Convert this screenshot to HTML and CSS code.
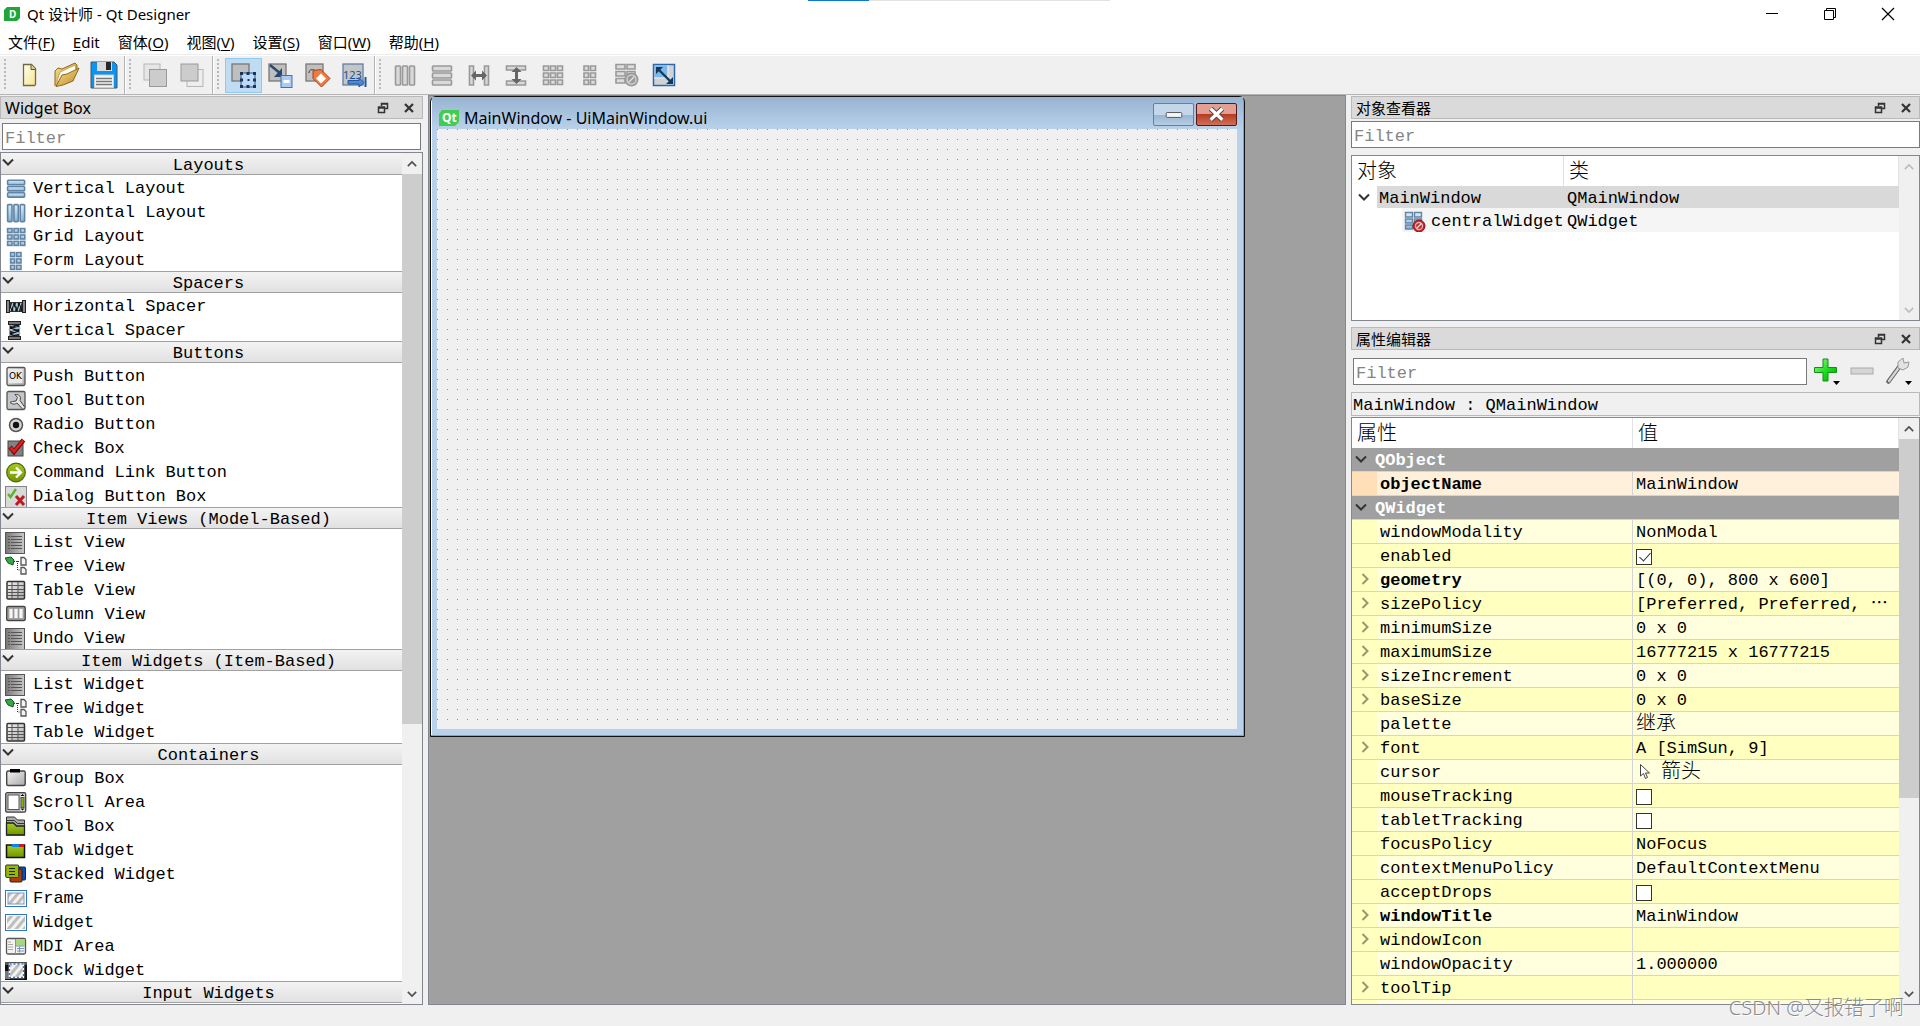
FILE: index.html
```html
<!DOCTYPE html>
<html lang="zh-CN">
<head>
<meta charset="utf-8">
<title>Qt 设计师 - Qt Designer</title>
<link rel="stylesheet" href="styles.css">
</head>
<body>
<svg class="defs" aria-hidden="true">
  <defs>
    <linearGradient id="blue" x1="0" y1="0" x2="0" y2="1"><stop offset="0" stop-color="#d9effb"/><stop offset="1" stop-color="#7fb4dc"/></linearGradient>
    <linearGradient id="grey" x1="0" y1="0" x2="1" y2="1"><stop offset="0" stop-color="#f4f4f4"/><stop offset="1" stop-color="#a9a9a9"/></linearGradient>
    <linearGradient id="dark" x1="0" y1="0" x2="1" y2="0"><stop offset="0" stop-color="#777"/><stop offset="1" stop-color="#c9c9c9"/></linearGradient>
    <linearGradient id="green" x1="0" y1="0" x2="0" y2="1"><stop offset="0" stop-color="#a8cc20"/><stop offset="1" stop-color="#6f9400"/></linearGradient>
    <linearGradient id="gold" x1="0" y1="0" x2="1" y2="1"><stop offset="0" stop-color="#fbe58a"/><stop offset="1" stop-color="#b8862a"/></linearGradient>
    <linearGradient id="paper" x1="0" y1="0" x2="1" y2="1"><stop offset="0" stop-color="#fffef2"/><stop offset="1" stop-color="#f6e58c"/></linearGradient>
    <linearGradient id="plus" x1="0" y1="0" x2="1" y2="1"><stop offset="0" stop-color="#b6f5a0"/><stop offset=".5" stop-color="#1fe01f"/><stop offset="1" stop-color="#00a800"/></linearGradient>
    <pattern id="hatch" width="6" height="6" patternUnits="userSpaceOnUse" patternTransform="rotate(40)"><rect width="6" height="6" fill="#f3f3f3"/><rect width="3" height="6" fill="#bdbdbd"/></pattern>
  </defs>
  <symbol id="down" viewBox="0 0 12 12"><path d="M1 3.500l5 5 5-5" fill="none" stroke="currentColor" stroke-width="2"/></symbol>
  <symbol id="up" viewBox="0 0 12 12"><path d="M1 8.500l5-5 5 5" fill="none" stroke="currentColor" stroke-width="2"/></symbol>
  <symbol id="right" viewBox="0 0 12 12"><path d="M3.500 1l5 5-5 5" fill="none" stroke="currentColor" stroke-width="2"/></symbol>
  <symbol id="float" viewBox="0 0 12 12"><path d="M4.500 4V1.500h6v5H8M4 2h7" fill="none" stroke="#333" stroke-width="1.500"/><path d="M1.500 5h6v5.500h-6zM1 6h7" fill="none" stroke="#333" stroke-width="1.500"/></symbol>
  <symbol id="cross" viewBox="0 0 12 12"><path d="M2 2l8 8M10 2l-8 8" stroke="#333" stroke-width="2.200"/></symbol>

  <symbol id="vlayout" viewBox="0 0 22 22"><g fill="url(#blue)" stroke="#6484a4" stroke-width="1.600"><rect x="2.600" y="2.300" width="17" height="4.400" rx=".8"/><rect x="2.600" y="8.500" width="17" height="4.400" rx=".8"/><rect x="2.600" y="14.700" width="17" height="4.400" rx=".8"/></g></symbol>
  <symbol id="hlayout" viewBox="0 0 22 22"><g fill="url(#blue)" stroke="#6484a4" stroke-width="1.600"><rect x="2.600" y="2.600" width="4.400" height="17" rx=".8"/><rect x="8.900" y="2.600" width="4.400" height="17" rx=".8"/><rect x="15.200" y="2.600" width="4.400" height="17" rx=".8"/></g></symbol>
  <symbol id="grid" viewBox="0 0 22 22"><g fill="url(#blue)" stroke="#6484a4" stroke-width="1.600"><rect x="2.600" y="2.600" width="4.400" height="4"/><rect x="9" y="2.600" width="4.400" height="4"/><rect x="15.400" y="2.600" width="4.400" height="4"/><rect x="2.600" y="9" width="4.400" height="4"/><rect x="9" y="9" width="4.400" height="4"/><rect x="15.400" y="9" width="4.400" height="4"/><rect x="2.600" y="15.400" width="4.400" height="4"/><rect x="9" y="15.400" width="4.400" height="4"/><rect x="15.400" y="15.400" width="4.400" height="4"/></g></symbol>
  <symbol id="form" viewBox="0 0 22 22"><g fill="url(#blue)" stroke="#6484a4" stroke-width="1.600"><rect x="5.600" y="2.600" width="4" height="4"/><rect x="11.600" y="2.600" width="4.400" height="4"/><rect x="5.600" y="9" width="4" height="4"/><rect x="11.600" y="9" width="4.400" height="4"/><rect x="5.600" y="15.400" width="4" height="4"/><rect x="11.600" y="15.400" width="4.400" height="4"/></g></symbol>
  <symbol id="hspacer" viewBox="0 0 22 22"><rect x="3" y="6" width="16" height="10" fill="#2b3036"/><path d="M5 15l3-8 1 8 3-8 1 8 3-8" fill="none" stroke="#a9c8da" stroke-width="1.300"/><path d="M4 7l3 8 2-8 3 8 2-8 3 8" fill="none" stroke="#111"/><rect x="1.500" y="4.500" width="3" height="12" fill="#888" stroke="#222"/><rect x="17.500" y="4.500" width="3" height="12" fill="#888" stroke="#222"/></symbol>
  <symbol id="vspacer" viewBox="0 0 22 22"><rect x="4.500" y="4" width="10" height="14" fill="#25292d"/><path d="M5 5l9 3-9 2 9 3-9 2" fill="none" stroke="#9dc3da" stroke-width="1.300"/><path d="M14 5l-9 3 9 3-9 3 9 3" fill="none" stroke="#111"/><rect x="3.500" y="1.500" width="12" height="3" fill="#777" stroke="#222"/><rect x="3.500" y="16.500" width="12" height="3" fill="#777" stroke="#222"/></symbol>
  <symbol id="tool" viewBox="0 0 22 22"><rect x="2" y="1.500" width="18" height="18" rx="1.500" fill="#c3c6ca" stroke="#555" stroke-width="1.300"/><path d="M5 12.500c4 3 6 1 7 .5l6 6.500 2-2-5-7c1.500-4-1-6.500-5-6l2.500 3-1.500 3.500-3.500.5z" fill="#e4e4e4" stroke="#444"/></symbol>
  <symbol id="radio" viewBox="0 0 22 22"><circle cx="11" cy="11" r="6.500" fill="#d5d5d5" stroke="#555" stroke-width="1.500"/><circle cx="11" cy="11" r="3.200" fill="#111"/></symbol>
  <symbol id="check" viewBox="0 0 22 22"><rect x="3" y="3" width="15" height="15" fill="#828282" stroke="#444"/><path d="M5 9l4 5 9.500-12" fill="none" stroke="#7a0909" stroke-width="4.500"/><path d="M5.500 9.500l3.500 4 9-11" fill="none" stroke="#dc1f1f" stroke-width="2.700"/></symbol>
  <symbol id="link" viewBox="0 0 22 22"><circle cx="11" cy="10.500" r="9.300" fill="url(#green)" stroke="#4f6510" stroke-width="1.200"/><path d="M5 10.500h11M11 5.500l5 5-5 5" fill="none" stroke="#fff" stroke-width="2.300"/></symbol>
  <symbol id="dialog" viewBox="0 0 22 22"><rect x=".5" y=".5" width="21" height="21" fill="#d9d9d9" stroke="#858585"/><path d="M3 8l2.500 3L11 3" fill="none" stroke="#58b52b" stroke-width="2.300"/><path d="M11 10l8 9M19 10l-8 9" stroke="#b81e24" stroke-width="3"/></symbol>
  <symbol id="list" viewBox="0 0 22 22"><rect x=".5" y=".5" width="19" height="21" fill="url(#dark)" stroke="#555"/><path d="M3 4.500h2M3 7.500h2M3 10.500h2M3 13.500h2M3 16.500h2M6 4.500h11M6 7.500h11M6 10.500h11M6 13.500h11M6 16.500h11" stroke="#555"/></symbol>
  <symbol id="tree" viewBox="0 0 22 22"><path d="M0 2l6-1 3 3-1 5-5-2z" fill="#35a846" stroke="#14581f"/><path d="M9 5.500h6M12.500 5v9h3" fill="none" stroke="#333" stroke-dasharray="1 1"/><path d="M16 1.500h3l2 2V9h-5zM16 11.500h3l2 2V18h-5z" fill="#f4f4f4" stroke="#555" stroke-width="1.300"/></symbol>
  <symbol id="table" viewBox="0 0 22 22"><rect x="2" y="1.500" width="17.500" height="17.500" rx="1" fill="url(#grey)" stroke="#333" stroke-width="1.500"/><path d="M2 5.500h17M2 9.500h17M2 12.500h17M2 15.500h17M7 2v17M13 2v17" stroke="#555"/></symbol>
  <symbol id="column" viewBox="0 0 22 22"><rect x="1.700" y="2.500" width="18.500" height="14" rx="1.500" fill="#aaa" stroke="#444" stroke-width="1.400"/><path d="M4 4.500h4v10H4zM9 4.500h4v10H9zM14 4.500h4v10h-4z" fill="#f6f6f6" stroke="#888" stroke-width=".6"/></symbol>
  <symbol id="group" viewBox="0 0 22 22"><rect x="1.700" y="3" width="18.500" height="14.500" rx="1.500" fill="url(#grey)" stroke="#444" stroke-width="1.400"/><rect x="5" y="1" width="10" height="3.500" fill="#000"/></symbol>
  <symbol id="scroll" viewBox="0 0 22 22"><rect x=".7" y=".7" width="20" height="19.500" rx="1.500" fill="#bdbdbd" stroke="#444" stroke-width="1.300"/><rect x="3" y="3" width="11" height="14.500" fill="#fff" stroke="#555"/><rect x="15.500" y="2" width="4" height="17" fill="#eee"/><rect x="16" y="5.500" width="3" height="10" fill="#8fb400" stroke="#456"/><path d="M17.500 2l2 2h-4zM17.500 18.500l2-2h-4z" fill="#000"/></symbol>
  <symbol id="toolbox" viewBox="0 0 22 22"><path d="M1.500 1h8l3 3h7v15h-18z" fill="#aaa" stroke="#333"/><path d="M1.500 4.500h8l3 3h7" fill="none" stroke="#333"/><path d="M1.500 7h7l3 3h8v9h-18z" fill="url(#green)" stroke="#222" stroke-width="1.300"/></symbol>
  <symbol id="tab" viewBox="0 0 22 22"><path d="M1.500 5h18v12.500h-18z" fill="url(#green)" stroke="#111" stroke-width="1.500"/><path d="M7 4h7v3H7z" fill="#0c87e8"/><path d="M14 4h5v3h-5z" fill="#e01414"/></symbol>
  <symbol id="stack" viewBox="0 0 22 22"><rect x="10" y="3" width="10.500" height="13" rx="1" fill="#0b4dbd" stroke="#222"/><rect x="5" y="5" width="12" height="13" rx="1" fill="#b23c08" stroke="#222"/><rect x=".7" y="1" width="13" height="12.500" rx="1" fill="#93b900" stroke="#333"/><path d="M4 4.500h6M4 7.500h6M4 10.500h6" stroke="#222"/></symbol>
  <symbol id="frame" viewBox="0 0 22 22"><rect x=".5" y="2.500" width="21" height="16" fill="#fff" stroke="#3076c8"/><rect x="3" y="5" width="16" height="11" fill="url(#hatch)" stroke="#7f99bd"/></symbol>
  <symbol id="widget" viewBox="0 0 22 22"><rect x=".5" y="2.500" width="21" height="16" fill="#fff" stroke="#3076c8"/><rect x="2" y="4" width="18" height="13" fill="url(#hatch)"/></symbol>
  <symbol id="mdi" viewBox="0 0 22 22"><rect x="1.500" y="2.500" width="19" height="15.500" rx="1.500" fill="#f3f3f3" stroke="#555" stroke-width="1.300"/><rect x="11" y="3.200" width="9" height="6.500" fill="#a9d57e"/><path d="M3 6h3M3 8.500h5M3 11h5M3 13.500h5" stroke="#aaa"/><path d="M10.500 3v15M10.500 10h9M12 12.500h7M12 15h7M14.500 10.500v6" stroke="#7694c4"/></symbol>
  <symbol id="dock" viewBox="0 0 22 22"><rect y="2" width="22" height="18" fill="#111"/><path d="M0 2h22v3H0z" fill="#555"/><path d="M0 11h5v8H0z" fill="#777"/><rect x="4.500" y="4" width="14" height="13.500" fill="url(#hatch)" stroke="#fff" stroke-width="1.500"/><rect x="4.500" y="4" width="14" height="13.500" fill="none" stroke="#3a76c4" stroke-width="1.300" stroke-dasharray="2 2"/></symbol>

  <symbol id="new" viewBox="0 0 28 28"><path d="M7.500 3.500h8l4 4v16l-1 1h-11z" fill="url(#paper)" stroke="#75683c" stroke-width="1.300"/><path d="M15 3.500v5h5" fill="#d8cf9a" stroke="#5f5636"/></symbol>
  <symbol id="open" viewBox="0 0 28 28"><path d="M2 25V10l3-3 4 1L22 2l2 2v5" fill="url(#gold)" stroke="#94691a"/><path d="M4 20l3-9 15-7 1 5-14 13z" fill="#fffdf2" stroke="#b9a46b"/><path d="M3 25.500L9 14l5-1 12-6-6 13-10 4z" fill="url(#gold)" stroke="#8f661c"/></symbol>
  <symbol id="save" viewBox="0 0 28 28"><path d="M1 1h23l3 3v23H1z" fill="#0c94f2" stroke="#4a545e"/><rect x="7" y="1" width="15" height="9" fill="#d8dadc"/><rect x="16" y="1" width="5" height="8" fill="#26292c"/><rect x="4.500" y="14" width="19" height="12.500" fill="#f4f4f4" stroke="#ccc"/><path d="M6 17.500h16M6 20.500h16M6 23.500h16" stroke="#777" stroke-width="1.300"/></symbol>
  <symbol id="front" viewBox="0 0 28 28"><rect x="3" y="3" width="16" height="16" fill="#e6e6e6" stroke="#b5b5b5"/><rect x="8.500" y="8.500" width="17" height="17" fill="#ccc" stroke="#999"/></symbol>
  <symbol id="back" viewBox="0 0 28 28"><rect x="9" y="8.500" width="16" height="17" fill="#eee" stroke="#b5b5b5"/><rect x="3" y="3" width="17" height="17" fill="#ccc" stroke="#999"/></symbol>
  <symbol id="edit" viewBox="0 0 28 28"><rect x="3" y="3" width="17" height="17" fill="#bfbfbf" stroke="#777" stroke-width="1.300"/><rect x="12" y="12" width="14" height="14" fill="#bcd8fb" stroke="#31578c"/><path d="M11 11h3v3h-3zM17.500 11h3v3h-3zM24 11h3v3h-3zM11 17.500h3v3h-3zM24 17.500h3v3h-3zM11 24h3v3h-3zM17.500 24h3v3h-3zM24 24h3v3h-3zM18.500 18h2v2h-2z" fill="#1c3557"/></symbol>
  <symbol id="signal" viewBox="0 0 28 28"><rect x="3" y="3" width="17" height="17" fill="#bfbfbf" stroke="#777" stroke-width="1.300"/><path d="M4 4l11 9" stroke="#294a6d" stroke-width="2.500"/><path d="M16 7v9H8z" fill="#294a6d"/><rect x="15" y="14.500" width="11" height="12" fill="#a9cbf5" stroke="#4770a8"/><rect x="17.500" y="19" width="6" height="3" fill="#fff"/></symbol>
  <symbol id="buddy" viewBox="0 0 28 28"><rect x="3" y="3" width="17" height="17" fill="#bfbfbf" stroke="#777" stroke-width="1.300"/><path d="M6 12c0-4 4-4 7-2" fill="none" stroke="#333"/><path d="M10 9.500l8-1 9 9-8.500 8.500-8.500-8.500z" fill="#f37a3e" stroke="#9d451c"/><path d="M18 12.500l5 5-5 5-5-5z" fill="#fff"/></symbol>
  <symbol id="g-h" viewBox="0 0 28 28"><g fill="#d9d9d9" stroke="#999" stroke-width="1.600"><rect x="4.500" y="5" width="5" height="19" rx=".8"/><rect x="11.500" y="5" width="5" height="19" rx=".8"/><rect x="18.500" y="5" width="5" height="19" rx=".8"/></g></symbol>
  <symbol id="g-v" viewBox="0 0 28 28"><g fill="#d9d9d9" stroke="#999" stroke-width="1.600"><rect x="4.500" y="5" width="19" height="5" rx=".8"/><rect x="4.500" y="12" width="19" height="5" rx=".8"/><rect x="4.500" y="19" width="19" height="5" rx=".8"/></g></symbol>
  <symbol id="g-hs" viewBox="0 0 28 28"><g fill="#d9d9d9" stroke="#999" stroke-width="1.600"><path d="M4.500 5h4v19h-4zM19.500 5h4v19h-4z"/></g><path d="M6 14.500l5-5v3.500h6V9.500l5 5-5 5V16h-6v3.500z" fill="#666"/></symbol>
  <symbol id="g-vs" viewBox="0 0 28 28"><g fill="#d9d9d9" stroke="#999" stroke-width="1.600"><path d="M4.500 5h19v4h-19zM4.500 20h19v4h-19z"/></g><path d="M14.500 6l5 5H16v7h3.500l-5 5-5-5H13v-7H9.500z" fill="#666"/></symbol>
  <symbol id="g-grid" viewBox="0 0 28 28"><g fill="#ddd" stroke="#999" stroke-width="1.600"><path d="M4.500 5h5v4.500h-5zM11.500 5h5v4.500h-5zM18.500 5h5v4.500h-5zM4.500 12h5v4.500h-5zM11.500 12h5v4.500h-5zM18.500 12h5v4.500h-5zM4.500 19h5v4.500h-5zM11.500 19h5v4.500h-5zM18.500 19h5v4.500h-5z"/></g></symbol>
  <symbol id="g-form" viewBox="0 0 28 28"><g fill="#ddd" stroke="#999" stroke-width="1.600"><path d="M8 5h4.500v4.500H8zM14.500 5h5v4.500h-5zM8 12h4.500v4.500H8zM14.500 12h5v4.500h-5zM8 19h4.500v4.500H8zM14.500 19h5v4.500h-5z"/></g></symbol>
  <symbol id="g-break" viewBox="0 0 28 28"><g fill="#ddd" stroke="#999" stroke-width="1.600"><path d="M3 3.500h9V8H3zM14 3.500h8V8h-8zM3 10.500h9V15H3zM14 10.500h8V15h-8zM3 17.500h9V22H3z"/></g><circle cx="18.500" cy="18.500" r="7" fill="#999"/><circle cx="18.500" cy="18.500" r="4.500" fill="none" stroke="#ccc" stroke-width="1.500"/><path d="M15.500 21.500l6-6" stroke="#ddd" stroke-width="1.500"/></symbol>
  <symbol id="adjust" viewBox="0 0 28 28"><rect x="3.500" y="3.500" width="21" height="21" fill="#cfd3d8" stroke="#2c68ad" stroke-width="1.500"/><rect x="4.500" y="4.500" width="13" height="12" fill="#7db8ec"/><path d="M18 4v13H4" fill="none" stroke="#eee"/><path d="M8 8l13 13" stroke="#12395c" stroke-width="2.300"/><path d="M6 6h7l-7 7zM23 23h-7l7-7z" fill="#12395c"/></symbol>
  <symbol id="broken" viewBox="0 0 22 22"><g fill="url(#blue)" stroke="#6484a4" stroke-width="1.400"><path d="M1.500 1.500h7V6h-7zM10.500 1.500h7V6h-7zM1.500 8h7v4h-7zM10.500 8h7v4h-7zM1.500 14h7v4h-7z"/></g><circle cx="15" cy="15" r="6" fill="#be2929" stroke="#812"/><circle cx="15" cy="15" r="3.500" fill="none" stroke="#e8b0b0" stroke-width="1.300"/><path d="M12.500 17.500l5-5" stroke="#f5d5d5" stroke-width="1.500"/></symbol>
  <symbol id="add" viewBox="0 0 26 30"><path d="M9 2h5v8.500h8.500v5H14V24H9v-8.500H.5v-5H9z" fill="url(#plus)" stroke="#109018"/><path d="M19 24h7l-3.500 4z" fill="#000"/></symbol>
  <symbol id="remove" viewBox="0 0 26 30"><rect x="1" y="11" width="22" height="6" fill="#d5d5d5" stroke="#aaa"/></symbol>
  <symbol id="wrench" viewBox="0 0 26 30"><path d="M2.500 24.500l11-15" stroke="#666" stroke-width="4.500" stroke-linecap="round"/><path d="M3 24l11-15" stroke="#d8d8d8" stroke-width="2.200" stroke-linecap="round"/><path d="M12 11V5l5-4 1 5 5-1-1 5-5 3z" fill="#e2e2e2" stroke="#999"/><path d="M19 24h7l-3.500 4z" fill="#000"/></symbol>
  <symbol id="arrow" viewBox="0 0 12 18"><path d="M1.500 1.500v11.500l3-2.500 2 5 2-1-2-4.500h4z" fill="#fff" stroke="#444"/></symbol>
</svg>

<header class="titlebar">
  <svg class="app-logo" viewBox="0 0 16 16"><path d="M3 1h13v11l-3 3H0V4z" fill="#1fa53a"/><text x="5" y="12" class="logo-d">D</text></svg>
  <h1 class="app-title">Qt 设计师 - Qt Designer</h1>
  <div class="sys-buttons">
    <button aria-label="最小化"><svg viewBox="0 0 14 14"><path d="M1 6.500h12" stroke="#000"/></svg></button>
    <button aria-label="还原"><svg viewBox="0 0 14 14"><path d="M1.500 3.500h9v9h-9zM3.500 3.500v-2h9v9h-2" fill="none" stroke="#000"/></svg></button>
    <button aria-label="关闭"><svg viewBox="0 0 14 14"><path d="M1 1l12 12M13 1L1 13" stroke="#000" stroke-width="1.200"/></svg></button>
  </div>
  <div class="progress"></div>
</header>

<nav class="menubar">
  <button>文件(<u>F</u>)</button><button><u>E</u>dit</button><button>窗体(<u>O</u>)</button><button>视图(<u>V</u>)</button><button>设置(<u>S</u>)</button><button>窗口(<u>W</u>)</button><button>帮助(<u>H</u>)</button>
</nav>

<div class="toolbars">
  <div class="toolbar">
    <button aria-label="新建"><svg><use href="#new"/></svg></button><button aria-label="打开"><svg><use href="#open"/></svg></button><button aria-label="保存"><svg><use href="#save"/></svg></button>
  </div>
  <div class="toolbar">
    <button aria-label="放到前面"><svg><use href="#front"/></svg></button><button aria-label="放到后面"><svg><use href="#back"/></svg></button>
  </div>
  <div class="toolbar">
    <button class="active" aria-label="编辑控件"><svg><use href="#edit"/></svg></button><button aria-label="编辑信号/槽"><svg><use href="#signal"/></svg></button><button aria-label="编辑伙伴"><svg><use href="#buddy"/></svg></button><button aria-label="编辑 Tab 顺序"><svg viewBox="0 0 28 28"><rect x="3" y="3" width="20" height="21" fill="#c5c5c5" stroke="#5f7fa9" stroke-width="1.300"/><text x="3" y="18" class="digits">123</text><path d="M8 19.500h11v-3l5 5-5 4.500v-3H8z" fill="#4d8ad6" stroke="#24569a"/><path d="M25.500 16v10" stroke="#24569a" stroke-width="2"/></svg></button>
  </div>
  <div class="toolbar">
    <button aria-label="水平布局"><svg><use href="#g-h"/></svg></button><button aria-label="垂直布局"><svg><use href="#g-v"/></svg></button><button aria-label="水平分裂器布局"><svg><use href="#g-hs"/></svg></button><button aria-label="垂直分裂器布局"><svg><use href="#g-vs"/></svg></button><button aria-label="栅格布局"><svg><use href="#g-grid"/></svg></button><button aria-label="表单布局"><svg><use href="#g-form"/></svg></button><button aria-label="打破布局"><svg><use href="#g-break"/></svg></button><button aria-label="调整大小"><svg><use href="#adjust"/></svg></button>
  </div>
</div>

<main class="workspace">
  <aside class="dock widget-box">
    <div class="dock-title latin"><h2>Widget Box</h2><button aria-label="浮动"><svg><use href="#float"/></svg></button><button aria-label="关闭"><svg><use href="#cross"/></svg></button></div>
    <input class="filter" type="text" placeholder="Filter" aria-label="Filter widgets">
    <div class="view">
      <div class="view-body">
        <h3><svg><use href="#down"/></svg>Layouts</h3>
        <ul>
          <li><svg><use href="#vlayout"/></svg>Vertical Layout</li>
          <li><svg><use href="#hlayout"/></svg>Horizontal Layout</li>
          <li><svg><use href="#grid"/></svg>Grid Layout</li>
          <li><svg><use href="#form"/></svg>Form Layout</li>
        </ul>
        <h3><svg><use href="#down"/></svg>Spacers</h3>
        <ul>
          <li><svg><use href="#hspacer"/></svg>Horizontal Spacer</li>
          <li><svg><use href="#vspacer"/></svg>Vertical Spacer</li>
        </ul>
        <h3><svg><use href="#down"/></svg>Buttons</h3>
        <ul>
          <li><svg viewBox="0 0 22 22"><rect x="2" y="1.500" width="18" height="18" rx="1.500" fill="url(#grey)" stroke="#555" stroke-width="1.300"/><rect x="3.500" y="3" width="14" height="14" fill="#e9e9e9"/><text x="4" y="13" class="tiny">OK</text></svg>Push Button</li>
          <li><svg><use href="#tool"/></svg>Tool Button</li>
          <li><svg><use href="#radio"/></svg>Radio Button</li>
          <li><svg><use href="#check"/></svg>Check Box</li>
          <li><svg><use href="#link"/></svg>Command Link Button</li>
          <li><svg><use href="#dialog"/></svg>Dialog Button Box</li>
        </ul>
        <h3><svg><use href="#down"/></svg>Item Views (Model-Based)</h3>
        <ul>
          <li><svg><use href="#list"/></svg>List View</li>
          <li><svg><use href="#tree"/></svg>Tree View</li>
          <li><svg><use href="#table"/></svg>Table View</li>
          <li><svg><use href="#column"/></svg>Column View</li>
          <li><svg><use href="#list"/></svg>Undo View</li>
        </ul>
        <h3><svg><use href="#down"/></svg>Item Widgets (Item-Based)</h3>
        <ul>
          <li><svg><use href="#list"/></svg>List Widget</li>
          <li><svg><use href="#tree"/></svg>Tree Widget</li>
          <li><svg><use href="#table"/></svg>Table Widget</li>
        </ul>
        <h3><svg><use href="#down"/></svg>Containers</h3>
        <ul>
          <li><svg><use href="#group"/></svg>Group Box</li>
          <li><svg><use href="#scroll"/></svg>Scroll Area</li>
          <li><svg><use href="#toolbox"/></svg>Tool Box</li>
          <li><svg><use href="#tab"/></svg>Tab Widget</li>
          <li><svg><use href="#stack"/></svg>Stacked Widget</li>
          <li><svg><use href="#frame"/></svg>Frame</li>
          <li><svg><use href="#widget"/></svg>Widget</li>
          <li><svg><use href="#mdi"/></svg>MDI Area</li>
          <li><svg><use href="#dock"/></svg>Dock Widget</li>
        </ul>
        <h3><svg><use href="#down"/></svg>Input Widgets</h3>
      </div>
      <div class="scrollbar"><svg><use href="#up"/></svg><div class="track"><div class="thumb thumb-widgets"></div></div><svg><use href="#down"/></svg></div>
    </div>
  </aside>

  <section class="mdi-area">
    <article class="form-window">
      <div class="form-title">
        <svg class="qt-logo" viewBox="0 0 20 16"><path d="M3 0h17v12l-4 4H0V4z" fill="#41cd52"/><text x="3" y="12" class="logo-qt">Qt</text></svg>
        <h2>MainWindow - UiMainWindow.ui</h2>
        <button class="form-min" aria-label="最小化"><svg viewBox="0 0 40 20"><rect x="12.500" y="8.500" width="16" height="5" rx="1" fill="#f6f6f6" stroke="#555"/></svg></button>
        <button class="form-close" aria-label="关闭"><svg viewBox="0 0 40 20"><path d="M14 4.500l12 11.500M26 4.500L14 16" stroke="#544" stroke-width="5.500"/><path d="M14 4.500l12 11.500M26 4.500L14 16" stroke="#fff" stroke-width="3.500"/></svg></button>
      </div>
      <div class="form-canvas"></div>
    </article>
  </section>

  <aside class="right-docks">
    <section class="dock inspector">
      <div class="dock-title"><h2>对象查看器</h2><button aria-label="浮动"><svg><use href="#float"/></svg></button><button aria-label="关闭"><svg><use href="#cross"/></svg></button></div>
      <input class="filter" type="text" placeholder="Filter" aria-label="Filter objects">
      <div class="view">
        <table class="objects">
          <thead><tr><th class="col-object">对象</th><th>类</th></tr></thead>
          <tbody>
            <tr class="selected"><td><div class="node"><svg class="twisty"><use href="#down"/></svg><span class="node-name">MainWindow</span></div></td><td>QMainWindow</td></tr>
            <tr class="alt"><td><div class="node child"><span class="node-name"><svg class="node-icon"><use href="#broken"/></svg>centralWidget</span></div></td><td>QWidget</td></tr>
          </tbody>
        </table>
        <div class="scrollbar idle"><svg><use href="#up"/></svg><div class="track"></div><svg><use href="#down"/></svg></div>
      </div>
    </section>

    <section class="dock editor">
      <div class="dock-title"><h2>属性编辑器</h2><button aria-label="浮动"><svg><use href="#float"/></svg></button><button aria-label="关闭"><svg><use href="#cross"/></svg></button></div>
      <div class="editor-tools">
        <input class="filter" type="text" placeholder="Filter" aria-label="Filter properties">
        <button aria-label="添加动态属性"><svg><use href="#add"/></svg></button><button aria-label="删除动态属性"><svg><use href="#remove"/></svg></button><button aria-label="配置"><svg><use href="#wrench"/></svg></button>
      </div>
      <p class="object-label">MainWindow : QMainWindow</p>
      <div class="view">
        <div class="view-body">
          <table class="properties">
            <thead><tr><th class="col-prop">属性</th><th>值</th></tr></thead>
            <tbody>
              <tr class="group"><th colspan="2"><svg><use href="#down"/></svg>QObject</th></tr>
              <tr class="object"><td><div class="prop"><i></i><b>objectName</b></div></td><td>MainWindow</td></tr>
              <tr class="group"><th colspan="2"><svg><use href="#down"/></svg>QWidget</th></tr>
              <tr><td><div class="prop"><i></i>windowModality</div></td><td>NonModal</td></tr>
              <tr><td><div class="prop"><i></i><label for="enabled">enabled</label></div></td><td><input id="enabled" type="checkbox" checked></td></tr>
              <tr><td><div class="prop"><i><svg><use href="#right"/></svg></i><b>geometry</b></div></td><td>[(0, 0), 800 x 600]</td></tr>
              <tr><td><div class="prop"><i><svg><use href="#right"/></svg></i>sizePolicy</div></td><td>[Preferred, Preferred, ⋯</td></tr>
              <tr><td><div class="prop"><i><svg><use href="#right"/></svg></i>minimumSize</div></td><td>0 x 0</td></tr>
              <tr><td><div class="prop"><i><svg><use href="#right"/></svg></i>maximumSize</div></td><td>16777215 x 16777215</td></tr>
              <tr><td><div class="prop"><i><svg><use href="#right"/></svg></i>sizeIncrement</div></td><td>0 x 0</td></tr>
              <tr><td><div class="prop"><i><svg><use href="#right"/></svg></i>baseSize</div></td><td>0 x 0</td></tr>
              <tr><td><div class="prop"><i></i>palette</div></td><td class="cjk">继承</td></tr>
              <tr><td><div class="prop"><i><svg><use href="#right"/></svg></i>font</div></td><td>A [SimSun, 9]</td></tr>
              <tr><td><div class="prop"><i></i>cursor</div></td><td class="cjk"><svg class="cursor-icon"><use href="#arrow"/></svg>箭头</td></tr>
              <tr><td><div class="prop"><i></i><label for="mouse">mouseTracking</label></div></td><td><input id="mouse" type="checkbox"></td></tr>
              <tr><td><div class="prop"><i></i><label for="tablet">tabletTracking</label></div></td><td><input id="tablet" type="checkbox"></td></tr>
              <tr><td><div class="prop"><i></i>focusPolicy</div></td><td>NoFocus</td></tr>
              <tr><td><div class="prop"><i></i>contextMenuPolicy</div></td><td>DefaultContextMenu</td></tr>
              <tr><td><div class="prop"><i></i><label for="drops">acceptDrops</label></div></td><td><input id="drops" type="checkbox"></td></tr>
              <tr><td><div class="prop"><i><svg><use href="#right"/></svg></i><b>windowTitle</b></div></td><td>MainWindow</td></tr>
              <tr><td><div class="prop"><i><svg><use href="#right"/></svg></i>windowIcon</div></td><td></td></tr>
              <tr><td><div class="prop"><i></i>windowOpacity</div></td><td>1.000000</td></tr>
              <tr><td><div class="prop"><i><svg><use href="#right"/></svg></i>toolTip</div></td><td></td></tr>
              <tr><td><div class="prop"><i></i></div></td><td></td></tr>
            </tbody>
          </table>
        </div>
        <div class="scrollbar"><svg><use href="#up"/></svg><div class="track"><div class="thumb thumb-props"></div></div><svg><use href="#down"/></svg></div>
      </div>
    </section>
  </aside>
</main>
<footer class="statusbar"></footer>
<div class="watermark">CSDN @又报错了啊</div>
</body>
</html>
```
FILE: styles.css
```css
* { box-sizing: border-box; }

:root {
  --ui: "Noto Sans", "Noto Sans CJK SC", sans-serif;
  --mono: "Liberation Mono", "Noto Sans CJK SC", monospace;
  --edge: #828790;
  --face: #f0f0f0;
}

body {
  margin: 0;
  height: 100vh;
  display: flex;
  flex-direction: column;
  overflow: hidden;
  background: var(--face);
  color: #000;
  font: 15px/20px var(--ui);
}

h1, h2, h3, ul, p { margin: 0; padding: 0; font-size: inherit; font-weight: normal; }
ul { list-style: none; }
button { padding: 0; border: 0; background: none; font: inherit; color: inherit; }
svg { display: block; flex: none; }
.defs { position: absolute; width: 0; height: 0; }
.tiny { font: 9px "DejaVu Sans", sans-serif; }
.digits { font: 11px "Noto Sans", sans-serif; fill: #1d4f94; }
.logo-d { font: bold 10px "Noto Sans", sans-serif; fill: #fff; }
.logo-qt { font: bold 12px "Noto Sans", sans-serif; fill: #fff; }

/* Title bar */
.titlebar {
  position: relative;
  display: flex;
  align-items: center;
  height: 30px;
  padding: 0 3px 2px 4px;
  background: #fff;
}
.app-logo { width: 16px; height: 16px; }
.app-title { flex: 1; padding-left: 7px; }
.sys-buttons { display: flex; }
.sys-buttons button { width: 58px; height: 28px; display: grid; place-items: center; }
.sys-buttons svg { width: 14px; height: 14px; }
.progress {
  position: absolute;
  top: 0;
  left: 808px;
  width: 302px;
  height: 1px;
  background: linear-gradient(90deg, #0a78d4 61px, #e3e3e3 61px);
}

/* Menu bar */
.menubar {
  display: flex;
  gap: 18px;
  height: 26px;
  padding: 0 8px 2px;
  background: #fff;
  box-shadow: inset 0 -1px #fff, inset 0 -2px #ececec;
}
.menubar u { text-underline-offset: 2px; }

/* Toolbars */
.toolbars { display: flex; height: 39px; border-bottom: 1px solid #b4b4b4; }
.toolbar {
  position: relative;
  display: flex;
  align-items: center;
  padding: 0 1px 0 12px;
  border-right: 1px solid #b4b4b4;
  box-shadow: 1px 0 #fff;
}
.toolbar:last-child { border: 0; box-shadow: none; }
.toolbar::before {
  content: "";
  position: absolute;
  left: 4px;
  top: 3px;
  width: 2px;
  height: 32px;
  background: repeating-linear-gradient(#b9b9b9 0 2px, transparent 2px 4px);
}
.toolbar button { width: 37px; height: 35px; padding-right: 2px; display: grid; place-items: center; }
.toolbar svg { width: 28px; height: 28px; }
.toolbar .active { background: #c0dcf3; border: 1px solid #90c8f6; }

/* Main area */
.workspace {
  flex: 1;
  min-height: 0;
  display: grid;
  grid-template-columns: 423px minmax(0, 1fr) 569px;
  gap: 5px;
}
.dock { display: flex; flex-direction: column; min-height: 0; }
.dock-title {
  flex: none;
  display: flex;
  align-items: center;
  height: 23px;
  padding-left: 4px;
  background: #dadada;
  border: 1px solid #b9b9b9;
}
.dock-title h2 { flex: 1; }
.dock-title.latin { font-size: 16px; }
.dock-title button { width: 26px; height: 20px; display: grid; place-items: center; }
.dock-title svg { width: 12px; height: 12px; }
.filter {
  flex: none;
  width: 100%;
  height: 27px;
  padding: 3px 2px 0;
  border: 1px solid #7a7a7a;
  background: #fff;
  font: 17px/22px var(--mono);
  outline: 0;
}
.filter::placeholder { color: #858585; opacity: 1; }

.view {
  flex: 1;
  display: flex;
  min-height: 0;
  align-items: stretch;
  background: #fff;
  border: 1px solid var(--edge);
  overflow: hidden;
  font: 17px/24px var(--mono);
}
.view-body { flex: 1; min-width: 0; overflow: hidden; }

.scrollbar {
  flex: none;
  width: 20px;
  display: flex;
  flex-direction: column;
  align-items: center;
  background: var(--face);
  color: #505050;
}
.scrollbar > svg { width: 10px; height: 10px; margin: 6px 0 5px; }
.scrollbar.idle { color: #bdbdbd; }
.track { flex: 1; width: 100%; }
.thumb { background: #cdcdcd; }
.thumb-widgets { height: 68%; }
.thumb-props { height: 66%; }

/* Widget box */
.widget-box { padding-top: 1px; }
.widget-box .filter { width: auto; margin: 4px 2px 2px; }
.widget-box h3 {
  position: relative;
  height: 22px;
  padding-left: 14px;
  line-height: 23px;
  text-align: center;
  background: linear-gradient(#f3f3f3, #e1e1e1);
  border: solid #a0a0a0;
  border-width: 1px 0;
}
.widget-box h3:first-child { border-top-color: #f3f3f3; }
.widget-box h3 svg { position: absolute; left: 1px; top: 2px; width: 12px; height: 12px; color: #333; }
.widget-box li { display: flex; align-items: center; gap: 6px; height: 24px; padding: 3px 0 0 4px; }
.widget-box li svg { width: 22px; height: 22px; }

/* Form canvas */
.mdi-area {
  position: relative;
  background: #a0a0a0;
  border: 1px solid var(--edge);
  overflow: hidden;
}
.form-window {
  position: absolute;
  left: 1px;
  top: 0;
  padding: 0 7px 7px 6px;
  background: #b9d1ea;
  border: 1px solid #111;
  border-radius: 6px 6px 0 0;
  box-shadow: inset -1px -1px #35c3e8, inset 1px 1px #fff;
}
.form-title {
  display: flex;
  align-items: center;
  height: 32px;
  margin: 0 -6px 0 -5px;
  padding: 4px 6px 0 7px;
  background: linear-gradient(#98b4d2, #b9d1ea);
  font-size: 16px;
}
.form-title h2 { flex: 1; padding: 5px 0 0 5px; }
.qt-logo { width: 20px; height: 16px; margin-top: 5px; }
.form-title button { width: 41px; height: 23px; margin-left: 2px; margin-bottom: 2px; border: 1px solid #64809e; border-radius: 2px; }
.form-title button svg { width: 39px; height: 20px; }
.form-min { background: linear-gradient(#c4d6ea 50%, #98b4d2 50%, #b5cde6); }
.form-title .form-close { border-color: #571a1c; background: linear-gradient(#e2a094 45%, #b83c22 50%, #d0705a); }
.form-canvas {
  width: 800px;
  height: 600px;
  background: var(--face) conic-gradient(from 270deg at 1px 1px, #8f8f8f 90deg, transparent 0) 0 0 / 10px 10px;
}

/* Right docks */
.right-docks { display: flex; flex-direction: column; gap: 6px; min-height: 0; padding-top: 1px; }
.inspector .filter { margin: 2px 0 7px; }
.inspector .view { flex: none; height: 166px; }
.editor { flex: 1; }

table { border-collapse: separate; border-spacing: 0; table-layout: fixed; width: 100%; }
th, td { padding: 0; font-weight: normal; text-align: left; white-space: nowrap; overflow: hidden; }
thead th {
  height: 30px;
  padding: 4px 0 0 5px;
  font-size: 20px;
  font-weight: 300;
  border-right: 1px solid #e2e2e2;
  background: #fff;
}

.objects { flex: 1; width: auto; align-self: flex-start; }
.col-object { width: 212px; }
.objects td + td { height: 24px; padding: 3px 0 0 3px; line-height: 21px; }
.objects .selected td + td { height: 22px; line-height: 19px; }
.selected td + td, .selected .node-name { background: #d9d9d9; }
.alt td + td, .alt .node-name { background: #f5f5f5; }
.node { display: flex; align-items: center; height: 24px; line-height: 21px; }
.selected .node { height: 22px; line-height: 19px; }
.node.child { padding-left: 50px; }
.node-name { flex: 1; align-self: stretch; display: flex; align-items: center; gap: 5px; padding: 3px 0 0 2px; }
.node-icon { width: 22px; height: 22px; }
.twisty { width: 12px; height: 12px; margin: 0 7px 0 6px; color: #333; }

.editor-tools { display: flex; align-items: center; height: 27px; margin: 8px 0 7px 2px; }
.editor-tools .filter { flex: 1; width: auto; margin-right: 5px; }
.editor-tools button { width: 36px; height: 30px; padding-left: 2px; }
.editor-tools svg { width: 26px; height: 30px; }
.object-label {
  flex: none;
  height: 24px;
  padding-left: 1px;
  margin-bottom: 1px;
  border: 1px solid #b9b9b9;
  font: 17px/25px var(--mono);
}

.col-prop { width: 281px; }
.properties tbody th, .properties td { height: 24px; line-height: 20px; border-bottom: 1px solid #d4d4d4; }
.properties td { background: #ffffbf; }
.properties tr:nth-child(even) td { background: #ffffdd; }
.properties tr.object td { background: #fff0dc; }
.properties td:first-child { border-right: 1px solid #d4d4d4; }
.properties td + td, .properties tbody th { padding: 3px 0 0 3px; }
.properties .cjk { font-size: 20px; font-weight: 300; }
.prop { display: flex; height: 23px; line-height: 26px; }
.prop i { width: 25px; margin-right: 3px; padding: 5px 0 0 7px; background: #ffffbf; color: #97976c; }
.prop i svg { width: 12px; height: 12px; }
.object .prop i { background: #ffdfb7; }
.properties .group th { background: #a0a0a0; color: #fff; font-weight: bold; }
.group svg { display: inline-block; width: 12px; height: 12px; margin-right: 8px; color: #333; }
.cursor-icon { display: inline-block; width: 12px; height: 18px; margin: 0 10px 0 3px; vertical-align: -3px; }

input[type="checkbox"] {
  appearance: none;
  display: block;
  width: 16px;
  height: 16px;
  margin: 0;
  border: 1px solid #333;
  background: #fff;
}
input[type="checkbox"]:checked::before {
  content: "";
  display: block;
  width: 5px;
  height: 10px;
  margin: 0 0 0 5px;
  border: solid #333;
  border-width: 0 1px 1px 0;
  transform: rotate(42deg);
}

.statusbar { flex: none; height: 21px; }
.watermark {
  position: absolute;
  right: 16px;
  bottom: 6px;
  color: #8b8b8b;
  font: 300 20px/24px var(--ui);
  text-shadow: 1px 1px #fff;
}
```
